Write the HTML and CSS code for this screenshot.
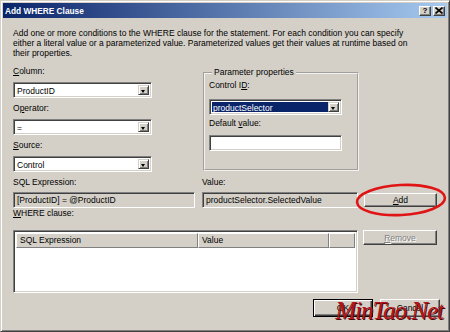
FILE: index.html
```html
<!DOCTYPE html>
<html lang="en">
<head>
    <meta charset="UTF-8">
    <title>Add WHERE Clause</title>
    <link rel="stylesheet" href="styles.css">
</head>
<body>

    <!-- Dialog window -->
    <div class="window">

        <!-- Caption bar -->
        <div class="titlebar">
            <span class="title">Add WHERE Clause</span>
            <div class="caption-buttons">
                <span class="cap-btn help">?</span>
                <span class="cap-btn">
                    <svg width="8" height="7" viewBox="0 0 8 7"><path d="M0.5 0.5 L7.5 6.5 M7.5 0.5 L0.5 6.5" stroke="#000" stroke-width="1.6"/></svg>
                </span>
            </div>
        </div>

        <div class="client">
            <p class="intro">Add one or more conditions to the WHERE clause for the statement. For each condition you can specify<br>either a literal value or a parameterized value. Parameterized values get their values at runtime based on<br>their properties.</p>

            <!-- Column / operator / source and parameter group -->
            <div class="top-row">
                <div class="left-col">
                    <div class="field">
                        <label><u>C</u>olumn:</label>
                        <div class="combo sunken"><span class="combo-text">ProductID</span><span class="combo-btn"></span></div>
                    </div>
                    <div class="field">
                        <label>O<u>p</u>erator:</label>
                        <div class="combo sunken"><span class="combo-text">=</span><span class="combo-btn"></span></div>
                    </div>
                    <div class="field">
                        <label><u>S</u>ource:</label>
                        <div class="combo sunken"><span class="combo-text">Control</span><span class="combo-btn"></span></div>
                    </div>
                </div>

                <fieldset class="params">
                    <legend>Parameter properties</legend>
                    <label class="ctl-label">Control I<u>D</u>:</label>
                    <div class="combo sunken ctl-combo"><span class="combo-text selected">productSelector</span><span class="combo-btn"></span></div>
                    <label class="def-label">Default <u>v</u>alue:</label>
                    <div class="textbox sunken def-box"></div>
                </fieldset>
            </div>

            <!-- Expression preview row -->
            <div class="expr-row">
                <div class="expr-sql">
                    <label>SQL Expression:</label>
                    <div class="textbox sunken readonly">[ProductID] = @ProductID</div>
                </div>
                <div class="expr-value">
                    <label>Value:</label>
                    <div class="textbox sunken readonly">productSelector.SelectedValue</div>
                </div>
                <div class="add-wrap">
                    <button class="btn add-btn"><u>A</u>dd</button>
                    <svg class="circle-mark" width="94" height="36" viewBox="0 0 94 36">
                        <ellipse cx="47" cy="18" rx="44" ry="15" fill="none" stroke="#e01414" stroke-width="2.6" transform="rotate(-3 47 18)"/>
                    </svg>
                </div>
            </div>

            <label class="where-label"><u>W</u>HERE clause:</label>
            <div class="list-row">
                <div class="listview sunken">
                    <div class="list-header">
                        <span class="col col-sql">SQL Expression</span>
                        <span class="col col-value">Value</span>
                        <span class="col col-rest"></span>
                    </div>
                </div>
                <button class="btn remove-btn" disabled><u>R</u>emove</button>
            </div>

            <!-- Dialog buttons -->
            <div class="footer">
                <button class="btn default-btn">OK</button>
                <button class="btn">Cancel</button>
                <span class="watermark">MinTao.Net</span>
            </div>
        </div>
    </div>

</body>
</html>
```

FILE: styles.css
```css
/* General page styling */
* {
    box-sizing: border-box;
}

body {
    margin: 0;
    background: #d4d0c8;
    font-family: "Liberation Sans", Arial, sans-serif;
    font-size: 8.5px;
    color: #000;
}

label {
    display: block;
    line-height: 11px;
}

/* Window frame */
.window {
    position: relative;
    width: 450px;
    height: 332px;
    padding: 2px;
    background: #d4d0c8;
    border: 1px solid;
    border-color: #d4d0c8 #404040 #404040 #d4d0c8;
    box-shadow: inset 1px 1px #fff, inset -1px -1px #808080;
}

/* Caption bar */
.titlebar {
    display: flex;
    align-items: center;
    height: 15px;
    padding: 0 2px 0 2px;
    background: linear-gradient(to right, #0a246a, #a6caf0);
}

.title {
    color: #fff;
    font-weight: bold;
    font-size: 8.3px;
}

.caption-buttons {
    display: flex;
    gap: 2px;
    margin-left: auto;
}

.cap-btn {
    display: flex;
    align-items: center;
    justify-content: center;
    width: 12px;
    height: 10px;
    background: #d4d0c8;
    border: 1px solid;
    border-color: #fff #404040 #404040 #fff;
    box-shadow: inset -1px -1px #808080;
}

.cap-btn.help {
    font-weight: bold;
    font-size: 8px;
    line-height: 8px;
}

/* Client area */
.client {
    position: relative;
    padding: 10px 7px 0 10px;
}

.intro {
    margin: 0;
    line-height: 10px;
    white-space: nowrap;
}

/* Shared 3D borders */
.sunken {
    border: 1px solid;
    border-color: #808080 #fff #fff #808080;
    box-shadow: inset 1px 1px #404040, inset -1px -1px #d4d0c8;
}

.btn {
    display: flex;
    align-items: center;
    justify-content: center;
    padding: 0;
    font-family: inherit;
    font-size: 8.5px;
    color: #000;
    background: #d4d0c8;
    border: 1px solid;
    border-color: #fff #404040 #404040 #fff;
    box-shadow: inset -1px -1px #808080;
}

/* Top row */
.top-row {
    display: flex;
    margin-top: 8px;
}

.left-col {
    display: flex;
    flex-direction: column;
    gap: 5px;
    width: 139px;
}

.combo {
    display: flex;
    height: 16px;
    margin-top: 5px;
    padding: 2px;
    background: #fff;
}

.combo-text {
    flex: 1;
    padding-left: 1px;
    line-height: 12px;
}

.combo-text.selected {
    background: #0a246a;
    color: #fff;
}

.combo-btn {
    position: relative;
    width: 11px;
    background: #d4d0c8;
    border: 1px solid;
    border-color: #d4d0c8 #404040 #404040 #d4d0c8;
    box-shadow: inset 1px 1px #fff, inset -1px -1px #808080;
}

.combo-btn::after {
    content: "";
    position: absolute;
    left: 2px;
    top: 4px;
    border-left: 2.5px solid transparent;
    border-right: 2.5px solid transparent;
    border-top: 3px solid #000;
}

/* Parameter properties group */
.params {
    width: 156px;
    height: 104px;
    margin: 1px 0 0 51px;
    padding: 0 6px 0 4px;
    border: 2px groove #f4f2ee;
}

.params legend {
    margin-left: 3px;
    padding: 0 2px;
    line-height: 11px;
}

.ctl-label {
    margin-top: 2px;
}

.ctl-combo {
    width: 133px;
    margin-top: 8px;
}

.def-label {
    margin-top: 3px;
}

.textbox {
    height: 16px;
    padding: 0 3px;
    line-height: 14px;
    background: #fff;
    white-space: nowrap;
    overflow: hidden;
}

.textbox.readonly {
    background: #d4d0c8;
}

.def-box {
    width: 133px;
    margin-top: 6px;
}

/* Expression row */
.expr-row {
    display: flex;
    align-items: flex-end;
    margin-top: 5px;
}

.expr-row label {
    margin-bottom: 4px;
}

.expr-sql {
    width: 182px;
}

.expr-value {
    width: 156px;
    margin-left: 7px;
}

.add-wrap {
    position: relative;
    margin: 0 0 1px 6px;
}

.add-btn {
    width: 73px;
    height: 14px;
}

.circle-mark {
    position: absolute;
    left: -10px;
    top: -11px;
}

/* WHERE clause list */
.where-label {
    margin-top: 0;
}

.list-row {
    display: flex;
    margin-top: 11px;
}

.listview {
    width: 345px;
    height: 63px;
    padding: 2px;
    background: #fff;
}

.list-header {
    display: flex;
    height: 15px;
}

.col {
    height: 15px;
    padding-left: 3px;
    line-height: 13px;
    background: #d4d0c8;
    border: 1px solid;
    border-color: #fff #808080 #808080 #fff;
}

.col-sql {
    width: 182px;
}

.col-value {
    width: 131px;
}

.col-rest {
    flex: 1;
}

.remove-btn {
    width: 74px;
    height: 15px;
    margin-left: 5px;
    color: #808080;
    text-shadow: 1px 1px #fff;
}

/* Dialog buttons */
.footer {
    position: relative;
    display: flex;
    justify-content: flex-end;
    gap: 7px;
    margin-top: 6px;
}

.footer .btn {
    width: 60px;
    height: 18px;
}

.default-btn {
    border: 1px solid #000;
    box-shadow: inset 1px 1px #fff, inset -1px -1px #404040, inset -2px -2px #808080;
}

.watermark {
    position: absolute;
    right: -3px;
    top: -2px;
    font-family: "Liberation Serif", serif;
    font-style: italic;
    font-size: 25px;
    letter-spacing: -1px;
    color: #b5161a;
    text-shadow: 1px 1px 0 #4a0808;
}
```
